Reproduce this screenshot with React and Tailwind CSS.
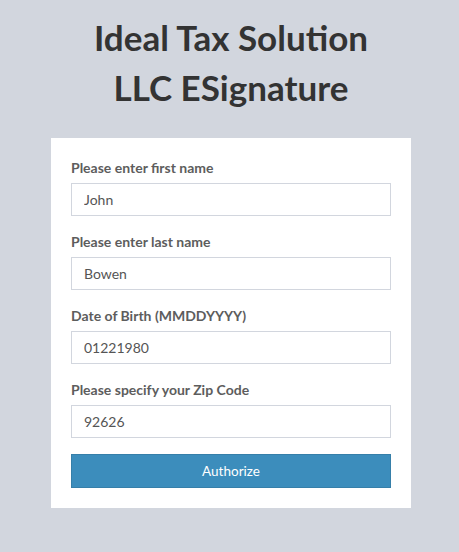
import React from "react";

const fields = [
  { label: "Please enter first name", value: "John" },
  { label: "Please enter last name", value: "Bowen" },
  { label: "Date of Birth (MMDDYYYY)", value: "01221980" },
  { label: "Please specify your Zip Code", value: "92626" },
];

function App() {
  return (
    <div
      className="min-h-[552px] w-full bg-[#d2d6de] pt-[12px] pl-[3px]"
      style={{ fontFamily: "Lato, 'Liberation Sans', sans-serif" }}
    >
      <h1 className="text-center text-[35px] font-bold leading-[50px] text-[#333]">
        Ideal Tax Solution
        <br />
        LLC ESignature
      </h1>
      <div className="mx-auto mt-[26px] w-[360px] bg-white px-[20px] pt-[21px] pb-[20px]">
        {fields.map((f, i) => (
          <div key={f.label} className={i === 3 ? "mb-[16px]" : "mb-[17px]"}>
            <div className="mb-[6px] text-[14px] font-bold leading-[18px] text-[#5d5d5d]">
              {f.label}
            </div>
            <input
              type="text"
              defaultValue={f.value}
              className="block h-[33px] w-full border border-[#d2d6de] px-[12px] text-[14px] text-[#555] outline-none"
            />
          </div>
        ))}
        <button className="block h-[34px] w-full border border-[#367fa9] bg-[#3c8dbc] text-[13.5px] text-white">
          Authorize
        </button>
      </div>
    </div>
  );
}

export default App;
